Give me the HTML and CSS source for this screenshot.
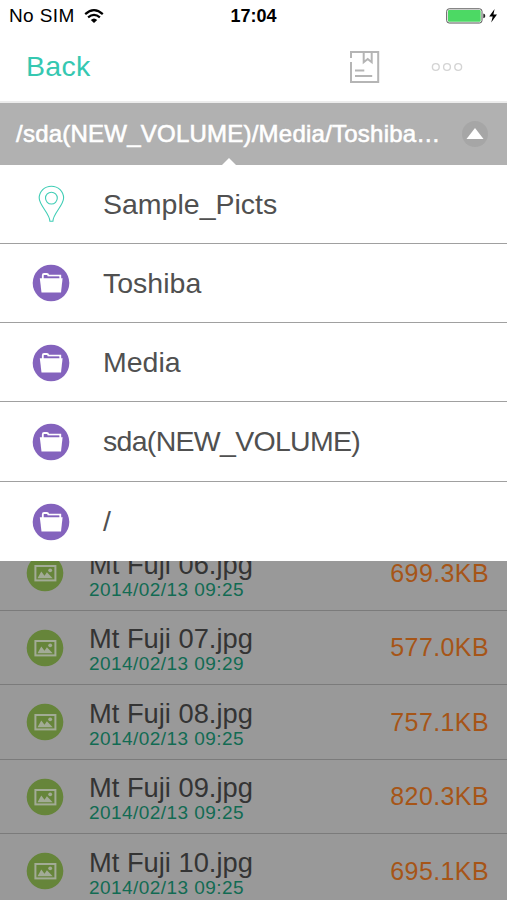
FILE: index.html
```html
<!DOCTYPE html>
<html lang="en">
<head>
<meta charset="UTF-8">
<meta name="viewport" content="width=device-width, initial-scale=1.0">
<title>Sample_Picts</title>
<link rel="stylesheet" href="styles.css">
</head>
<body>

<!-- icons that are used more than once -->
<svg class="defs" width="0" height="0">
    <symbol id="folder" viewBox="0 0 38 38">
        <circle cx="19" cy="19" r="18.3" fill="#8463bd"/>
        <path d="M7.8 14.2h22.800l-1.600 14.400H9.500z" fill="#fff"/>
        <path d="M10.800 15v-3.700q0-1.300 1.300-1.300h2.800q1.200 0 1.500 1.700h11.900V15" fill="none" stroke="#fff" stroke-width="1.8"/>
        <path d="M12.200 13.300h14.800" stroke="#8463bd" stroke-width="1.2"/>
    </symbol>
    <symbol id="photo" viewBox="0 0 38 38">
        <circle cx="19" cy="19" r="18.3" fill="#66853a"/>
        <rect x="9.400" y="12" width="20" height="14.400" fill="none" stroke="#a2ab96" stroke-width="2"/>
        <path d="M11.500 24.300l3.800-6.700 3.200 4.200 2.400-3.500 5.800 6z" fill="#a2ab96"/>
        <circle cx="24.200" cy="16.300" r="1.900" fill="#a2ab96"/>
    </symbol>
</svg>

<div class="phone">
    <div class="status">
        <div class="carrier">
            <span>No SIM</span>
            <svg width="20" height="15" viewBox="0 0 20 15">
                <path d="M1.2 5.1Q10-2.7 18.8 5.1" fill="none" stroke="#000" stroke-width="2.2"/>
                <path d="M4.1 8.4Q10 3.2 15.9 8.4" fill="none" stroke="#000" stroke-width="2.2"/>
                <path d="M6.8 11.1Q10 8 13.2 11.1L10 14.1z"/>
            </svg>
        </div>
        <div class="clock">17:04</div>
        <div class="power">
            <svg width="52" height="16" viewBox="0 0 52 16">
                <rect x=".7" y=".8" width="35.3" height="14.2" rx="2.5" fill="#fff" stroke="#555" stroke-width="1"/>
                <rect x="2" y="2.1" width="32.7" height="11.6" rx="1" fill="#4cd964"/>
                <path d="M37.3 5.5q2 .5 2 2.4t-2 2.4z" fill="#222"/>
                <path d="M48.6 1L43.2 8.6h3.5L45.2 14.5l5.8-7.9h-3.6z"/>
            </svg>
        </div>
    </div>

    <div class="navbar">
        <a class="back">Back</a>
        <div class="tools">
            <svg width="32" height="34" viewBox="0 0 32 34" fill="none" stroke="#b5b5b5" stroke-width="2">
                <path d="M2 8V1.9h27.2v30.2H2V12"/>
                <path d="M14.7 2v10.2l4-3.2 4 3.2V2"/>
                <path d="M6 20.5h9.3M6 25.9h17.2"/>
            </svg>
            <svg width="32" height="10" viewBox="0 0 32 10" fill="none" stroke="#d4d4d4" stroke-width="1.4">
                <circle cx="4.8" cy="5" r="3.4"/>
                <circle cx="16" cy="5" r="3.4"/>
                <circle cx="27.2" cy="5" r="3.4"/>
            </svg>
        </div>
    </div>

    <div class="pathbar">
        <span class="path">/sda(NEW_VOLUME)/Media/Toshiba…</span>
        <svg class="toggle" width="26" height="26" viewBox="0 0 26 26">
            <circle cx="13" cy="13" r="13" fill="#a6a6a6"/>
            <path d="M13 7l8.5 11h-17z" fill="#fff"/>
        </svg>
        <div class="arrow"></div>
    </div>

    <div class="menu">
        <div class="menu-row">
            <svg width="38" height="38" viewBox="0 0 38 38" fill="none" stroke="#3fcdb5" stroke-width="1.1">
                <path d="M19.4 1.2c-6.900 0-12.200 5.300-12.200 11.900 0 7.500 10.700 15.400 10.700 23.200h3c0-7.800 10.700-15.700 10.700-23.200 0-6.600-5.300-11.900-12.200-11.900z"/>
                <circle cx="19.4" cy="13.1" r="5.9"/>
            </svg>
            <span>Sample_Picts</span>
        </div>
        <div class="menu-row">
            <svg width="38" height="38"><use href="#folder"/></svg>
            <span>Toshiba</span>
        </div>
        <div class="menu-row">
            <svg width="38" height="38"><use href="#folder"/></svg>
            <span>Media</span>
        </div>
        <div class="menu-row">
            <svg width="38" height="38"><use href="#folder"/></svg>
            <span class="tight">sda(NEW_VOLUME)</span>
        </div>
        <div class="menu-row">
            <svg width="38" height="38"><use href="#folder"/></svg>
            <span>/</span>
        </div>
    </div>

    <!-- file list, dimmed while the menu is open -->
    <div class="files">
        <div class="file">
            <svg width="38" height="38"><use href="#photo"/></svg>
            <div class="info">
                <div class="name">Mt Fuji 06.jpg</div>
                <div class="date">2014/02/13 09:25</div>
            </div>
            <div class="size">699.3KB</div>
        </div>
        <div class="file">
            <svg width="38" height="38"><use href="#photo"/></svg>
            <div class="info">
                <div class="name">Mt Fuji 07.jpg</div>
                <div class="date">2014/02/13 09:29</div>
            </div>
            <div class="size">577.0KB</div>
        </div>
        <div class="file">
            <svg width="38" height="38"><use href="#photo"/></svg>
            <div class="info">
                <div class="name">Mt Fuji 08.jpg</div>
                <div class="date">2014/02/13 09:25</div>
            </div>
            <div class="size">757.1KB</div>
        </div>
        <div class="file">
            <svg width="38" height="38"><use href="#photo"/></svg>
            <div class="info">
                <div class="name">Mt Fuji 09.jpg</div>
                <div class="date">2014/02/13 09:25</div>
            </div>
            <div class="size">820.3KB</div>
        </div>
        <div class="file">
            <svg width="38" height="38"><use href="#photo"/></svg>
            <div class="info">
                <div class="name">Mt Fuji 10.jpg</div>
                <div class="date">2014/02/13 09:25</div>
            </div>
            <div class="size">695.1KB</div>
        </div>
    </div>
</div>

</body>
</html>
```
FILE: styles.css
```css
* {
    box-sizing: border-box;
}

body {
    margin: 0;
    font-family: "Liberation Sans", Arial, sans-serif;
    background: #fff;
}

svg {
    display: block;
    flex-shrink: 0;
}

.defs {
    position: absolute;
}

.phone {
    display: flex;
    flex-direction: column;
    width: 507px;
    height: 900px;
    overflow: hidden;
}

/* status bar */
.status {
    display: grid;
    grid-template-columns: 1fr auto 1fr;
    align-items: center;
    height: 32px;
    padding: 0 9px;
}

.carrier {
    display: flex;
    align-items: center;
    gap: 9px;
    font-size: 19px;
    letter-spacing: 0.4px;
}

.clock {
    font-size: 18px;
    font-weight: bold;
}

.power {
    display: flex;
    justify-content: flex-end;
}

/* top bar */
.navbar {
    display: flex;
    justify-content: space-between;
    align-items: center;
    height: 71px;
    padding: 0 44px 0 26px;
    border-bottom: 2px solid #ececec;
}

.back {
    font-size: 28.5px;
    letter-spacing: 0.3px;
    color: #35c8b1;
}

.tools {
    display: flex;
    align-items: center;
    gap: 50px;
}

.pathbar {
    position: relative;
    display: flex;
    justify-content: space-between;
    align-items: center;
    height: 61.5px;
    padding: 0 19px 0 16px;
    background: #b1b1b1;
    color: #fff;
}

.path {
    font-size: 24px;
    letter-spacing: 0.23px;
    white-space: nowrap;
    -webkit-text-stroke: 0.6px #fff;
}

.arrow {
    position: absolute;
    left: 222px;
    bottom: 0;
    border: 7px solid transparent;
    border-top: 0;
    border-bottom-color: #fff;
}

/* folder menu */
.menu-row {
    display: flex;
    align-items: center;
    gap: 33px;
    height: 79.25px;
    padding: 1px 0 0 32px;
    border-bottom: 1.5px solid #a0a0a0;
    background: #fff;
    font-size: 28.5px;
    color: #505050;
}

.menu-row:last-child {
    border-bottom: 0;
}

.tight {
    letter-spacing: -0.7px;
}

/* file list */
.files {
    flex: 1;
    overflow: hidden;
    background: #999;
}

.file {
    display: flex;
    align-items: center;
    height: 74.5px;
    padding: 0 18px 0 26px;
    border-bottom: 1.5px solid #7b7b7b;
}

.file:first-child {
    margin-top: -24.5px;
}

.info {
    flex: 1;
    padding: 4px 0 0 25px;
}

.name {
    font-size: 27.3px;
    line-height: 29px;
    color: #343434;
}

.date {
    font-size: 19px;
    line-height: 22px;
    letter-spacing: 0.45px;
    color: #126b53;
}

.size {
    font-size: 25px;
    letter-spacing: 0.4px;
    color: #a65517;
}
```
